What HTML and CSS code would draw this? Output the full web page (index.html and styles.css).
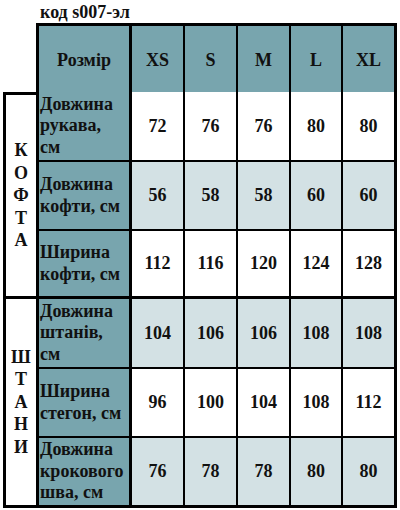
FILE: index.html
```html
<!DOCTYPE html>
<html>
<head>
<meta charset="utf-8">
<link rel="stylesheet" href="styles.css">
</head>
<body>
<div class="page">
  <div class="title">код s007-эл</div>
  <div class="grid">
    <div class="corner"></div>
    <div class="hd lab">Розмір</div>
    <div class="hd">XS</div>
    <div class="hd">S</div>
    <div class="hd">M</div>
    <div class="hd">L</div>
    <div class="hd last">XL</div>

    <div class="sec sec1">К<br>О<br>Ф<br>Т<br>А</div>
    <div class="lab cell b2">Довжина<br>рукава,<br>см</div>
    <div class="val b2">72</div><div class="val b2">76</div><div class="val b2">76</div><div class="val b2">80</div><div class="val b2 last">80</div>

    <div class="lab cell b2">Довжина<br>кофти, см</div>
    <div class="val b2 lt">56</div><div class="val b2 lt">58</div><div class="val b2 lt">58</div><div class="val b2 lt">60</div><div class="val b2 lt last">60</div>

    <div class="lab cell b3">Ширина<br>кофти, см</div>
    <div class="val b3">112</div><div class="val b3">116</div><div class="val b3">120</div><div class="val b3">124</div><div class="val b3 last">128</div>

    <div class="sec sec2">Ш<br>Т<br>А<br>Н<br>И</div>
    <div class="lab cell b2">Довжина<br>штанів,<br>см</div>
    <div class="val b2 lt">104</div><div class="val b2 lt">106</div><div class="val b2 lt">106</div><div class="val b2 lt">108</div><div class="val b2 lt last">108</div>

    <div class="lab cell b2">Ширина<br>стегон, см</div>
    <div class="val b2">96</div><div class="val b2">100</div><div class="val b2">104</div><div class="val b2">108</div><div class="val b2 last">112</div>

    <div class="lab cell b3">Довжина<br>крокового<br>шва, см</div>
    <div class="val b3 lt">76</div><div class="val b3 lt">78</div><div class="val b3 lt">78</div><div class="val b3 lt">80</div><div class="val b3 lt last">80</div>
  </div>
</div>
</body>
</html>
```

FILE: styles.css
```css
html, body {
  margin: 0;
  padding: 0;
  background: #ffffff;
}
body {
  width: 400px;
  height: 510px;
  overflow: hidden;
  font-family: "Liberation Serif", "Times New Roman", serif;
  font-weight: bold;
  font-size: 18px;
  color: #111;
}
.page {
  padding-left: 3px;
}
.title {
  height: 23px;
  line-height: 25px;
  padding-left: 37px;
  font-size: 18px;
  box-sizing: border-box;
}
.grid {
  display: grid;
  grid-template-columns: 33px 96px 53px 53px 53px 52px 54px;
  grid-template-rows: 69px 70px 69px 68px 70px 69px 70px;
}
.grid > div {
  box-sizing: border-box;
}
.corner {
  background: transparent;
}
.hd {
  background: #78a5ae;
  border-top: 3px solid #000;
  border-right: 2px solid #000;
  display: flex;
  align-items: center;
  justify-content: center;
  padding-top: 2px;
}
.hd.lab {
  border-left: 3px solid #000;
  border-right: 3px solid #000;
}
.last {
  border-right: 3px solid #000 !important;
}
.cell.lab {
  background: #78a5ae;
  border-left: 3px solid #000;
  border-right: 3px solid #000;
  display: flex;
  align-items: center;
  padding-left: 1px;
  line-height: 21.5px;
  white-space: nowrap;
}
.val {
  background: #fff;
  border-right: 2px solid #000;
  display: flex;
  align-items: center;
  justify-content: center;
}
.val.lt {
  background: #d3e1e4;
}
.b2 {
  border-bottom: 2px solid #000;
}
.b3 {
  border-bottom: 3px solid #000;
}
.sec {
  grid-column: 1;
  grid-row: span 3;
  border-left: 3px solid #000;
  border-bottom: 3px solid #000;
  display: flex;
  align-items: center;
  justify-content: center;
  text-align: center;
  line-height: 22.5px;
  background: #fff;
}
.sec1 {
  border-top: 3px solid #000;
}
```
